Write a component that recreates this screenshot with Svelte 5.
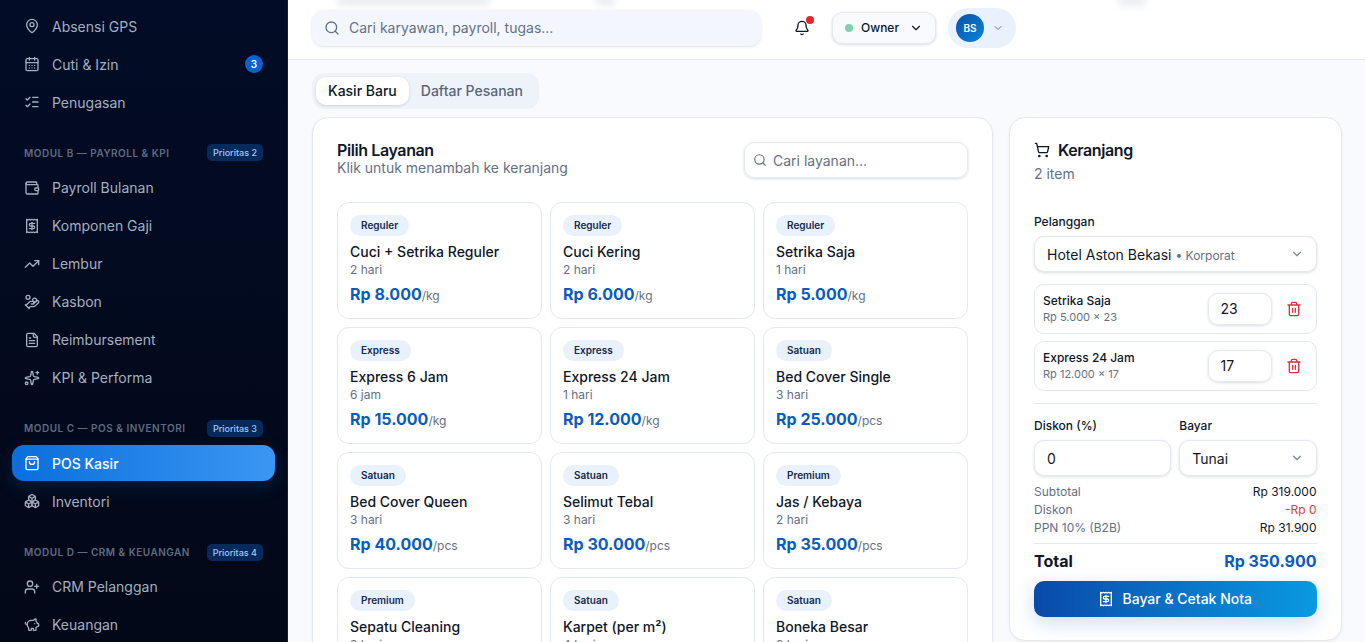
<script>
  const nav = [
    { label: 'Absensi GPS', icon: 'pin' },
    { label: 'Cuti & Izin', icon: 'calendar', count: 3 },
    { label: 'Penugasan', icon: 'tasks' },
    { section: 'MODUL B — PAYROLL & KPI', tag: 'Prioritas 2' },
    { label: 'Payroll Bulanan', icon: 'wallet' },
    { label: 'Komponen Gaji', icon: 'receipt' },
    { label: 'Lembur', icon: 'trend' },
    { label: 'Kasbon', icon: 'hand' },
    { label: 'Reimbursement', icon: 'file' },
    { label: 'KPI & Performa', icon: 'sparkles' },
    { section: 'MODUL C — POS & INVENTORI', tag: 'Prioritas 3' },
    { label: 'POS Kasir', icon: 'bag', active: true },
    { label: 'Inventori', icon: 'boxes' },
    { section: 'MODUL D — CRM & KEUANGAN', tag: 'Prioritas 4' },
    { label: 'CRM Pelanggan', icon: 'userplus' },
    { label: 'Keuangan', icon: 'piggy' }
  ];

  const icons = {
    pin: '<path d="M20 10c0 5-5.5 10.2-7.4 11.8a1 1 0 0 1-1.2 0C9.500 20.200 4 15 4 10a8 8 0 0 1 16 0"/><circle cx="12" cy="10" r="3"/>',
    calendar: '<path d="M8 2v4M16 2v4"/><rect x="3" y="4" width="18" height="18" rx="2"/><path d="M3 10h18M8 14h.01M12 14h.01M16 14h.01M8 18h.01M12 18h.01M16 18h.01"/>',
    tasks: '<path d="M13 5h8M13 12h8M13 19h8M3 17l2 2 4-4M3 7l2 2 4-4"/>',
    wallet: '<path d="M19 7V4a1 1 0 0 0-1-1H5a2 2 0 0 0 0 4h15a1 1 0 0 1 1 1v4h-3a2 2 0 0 0 0 4h3a1 1 0 0 0 1-1v-2a1 1 0 0 0-1-1"/><path d="M3 5v14a2 2 0 0 0 2 2h15a1 1 0 0 0 1-1v-4"/>',
    receipt: '<path d="M4 2v20l2-1 2 1 2-1 2 1 2-1 2 1 2-1 2 1V2l-2 1-2-1-2 1-2-1-2 1-2-1-2 1Z"/><path d="M16 8h-6a2 2 0 1 0 0 4h4a2 2 0 1 1 0 4H8M12 17.500v-11"/>',
    trend: '<path d="M16 7h6v6"/><path d="m22 7-8.500 8.500-5-5L2 17"/>',
    hand: '<path d="M11 15h2a2 2 0 1 0 0-4h-3c-.6 0-1.100.2-1.400.6L3 17"/><path d="m7 21 1.600-1.400c.3-.4.8-.6 1.400-.6h4c1.100 0 2.100-.4 2.800-1.200l4.600-4.400a2 2 0 0 0-2.750-2.910l-4.200 3.900M2 16l6 6"/><circle cx="16" cy="9" r="2.900"/><circle cx="6" cy="5" r="3"/>',
    file: '<path d="M15 2H6a2 2 0 0 0-2 2v16a2 2 0 0 0 2 2h12a2 2 0 0 0 2-2V7Z"/><path d="M14 2v4a2 2 0 0 0 2 2h4M10 9H8M16 13H8M16 17H8"/>',
    sparkles: '<path d="M11.017 2.814a1 1 0 0 1 1.966 0l1.051 5.558a2 2 0 0 0 1.594 1.594l5.558 1.051a1 1 0 0 1 0 1.966l-5.558 1.051a2 2 0 0 0-1.594 1.594l-1.051 5.558a1 1 0 0 1-1.966 0l-1.051-5.558a2 2 0 0 0-1.594-1.594l-5.558-1.051a1 1 0 0 1 0-1.966l5.558-1.051a2 2 0 0 0 1.594-1.594z"/><path d="M20 2v4M22 4h-4"/><circle cx="4" cy="20" r="2"/>',
    bag: '<path d="M16 10a4 4 0 0 1-8 0"/><path d="M3.100 6.200h17.800"/><path d="M3.400 5.500 5 3.300A2 2 0 0 1 6.600 2.500h10.800a2 2 0 0 1 1.600.8l1.600 2.200a2 2 0 0 1 .4 1.200V20a2 2 0 0 1-2 2H5a2 2 0 0 1-2-2V6.700a2 2 0 0 1 .4-1.200Z"/>',
    boxes: '<path d="M2.970 12.920A2 2 0 0 0 2 14.630v3.240a2 2 0 0 0 .97 1.710l3 1.800a2 2 0 0 0 2.060 0L12 19v-5.500l-5-3-4.030 2.420Z"/><path d="m7 16.500-4.740-2.850M7 16.500l5-3M7 16.500v5.170"/><path d="M12 13.500V19l3.970 2.380a2 2 0 0 0 2.060 0l3-1.800a2 2 0 0 0 .97-1.710v-3.240a2 2 0 0 0-.97-1.710L17 10.500l-5 3Z"/><path d="m17 16.500-5-3M17 16.500l4.740-2.850M17 16.500v5.170"/><path d="M7.970 4.420A2 2 0 0 0 7 6.130v4.370l5 3 5-3V6.130a2 2 0 0 0-.97-1.710l-3-1.800a2 2 0 0 0-2.060 0l-3 1.800Z"/><path d="M12 8 7.260 5.150M12 8l4.740-2.850M12 13.500V8"/>',
    userplus: '<path d="M16 21v-2a4 4 0 0 0-4-4H6a4 4 0 0 0-4 4v2"/><circle cx="9" cy="7" r="4"/><path d="M19 8v6M22 11h-6"/>',
    piggy: '<path d="M11 17h3v2a1 1 0 0 0 1 1h2a1 1 0 0 0 1-1v-3a3.200 3.200 0 0 0 2-2h1a1 1 0 0 0 1-1v-2a1 1 0 0 0-1-1h-1a5 5 0 0 0-2-4V3a4 4 0 0 0-3.200 1.600l-.3.400H11a6 6 0 0 0-6 6v1a5 5 0 0 0 2 4v3a1 1 0 0 0 1 1h2a1 1 0 0 0 1-1z"/><path d="M16 10h.01M2 8v1a2 2 0 0 0 2 2h1"/>'
  };

  const services = [
    { tag: 'Reguler', name: 'Cuci + Setrika Reguler', time: '2 hari', price: 'Rp 8.000', unit: '/kg' },
    { tag: 'Reguler', name: 'Cuci Kering', time: '2 hari', price: 'Rp 6.000', unit: '/kg' },
    { tag: 'Reguler', name: 'Setrika Saja', time: '1 hari', price: 'Rp 5.000', unit: '/kg' },
    { tag: 'Express', name: 'Express 6 Jam', time: '6 jam', price: 'Rp 15.000', unit: '/kg' },
    { tag: 'Express', name: 'Express 24 Jam', time: '1 hari', price: 'Rp 12.000', unit: '/kg' },
    { tag: 'Satuan', name: 'Bed Cover Single', time: '3 hari', price: 'Rp 25.000', unit: '/pcs' },
    { tag: 'Satuan', name: 'Bed Cover Queen', time: '3 hari', price: 'Rp 40.000', unit: '/pcs' },
    { tag: 'Satuan', name: 'Selimut Tebal', time: '3 hari', price: 'Rp 30.000', unit: '/pcs' },
    { tag: 'Premium', name: 'Jas / Kebaya', time: '2 hari', price: 'Rp 35.000', unit: '/pcs' },
    { tag: 'Premium', name: 'Sepatu Cleaning', time: '3 hari', price: 'Rp 50.000', unit: '/psg' },
    { tag: 'Satuan', name: 'Karpet (per m²)', time: '4 hari', price: 'Rp 20.000', unit: '/m²' },
    { tag: 'Satuan', name: 'Boneka Besar', time: '2 hari', price: 'Rp 30.000', unit: '/pcs' }
  ];

  const cart = [
    { name: 'Setrika Saja', detail: 'Rp 5.000 × 23', qty: 23 },
    { name: 'Express 24 Jam', detail: 'Rp 12.000 × 17', qty: 17 }
  ];
</script>

<div class="app">
  <aside class="sidebar">
    {#each nav as item}
      {#if item.section}
        <div class="section">
          <span>{item.section}</span>
          <em>{item.tag}</em>
        </div>
      {:else}
        <div class="nav-item" class:active={item.active}>
          <svg class="ico" viewBox="0 0 24 24">{@html icons[item.icon]}</svg>
          <span>{item.label}</span>
          {#if item.count}<b>{item.count}</b>{/if}
        </div>
      {/if}
    {/each}
  </aside>

  <div class="main">
    <header class="topbar">
      <!-- blurred page text showing through the top edge of the bar -->
      <i class="smear one"></i>
      <i class="smear two"></i>
      <i class="smear three"></i>
      <div class="global-search">
        <svg class="ico" viewBox="0 0 24 24"><circle cx="11" cy="11" r="8"/><path d="m21 21-4.300-4.300"/></svg>
        <span>Cari karyawan, payroll, tugas...</span>
      </div>
      <div class="bell">
        <svg class="ico" viewBox="0 0 24 24"><path d="M10.300 21a1.900 1.900 0 0 0 3.400 0"/><path d="M3.300 15.300A1 1 0 0 0 4 17h16a1 1 0 0 0 .7-1.700C19.400 14 18 12.500 18 8A6 6 0 0 0 6 8c0 4.500-1.400 6-2.700 7.300"/></svg>
        <i></i>
      </div>
      <div class="role">
        <i></i>
        <span>Owner</span>
        <svg class="ico" viewBox="0 0 24 24"><path d="m6 9 6 6 6-6"/></svg>
      </div>
      <div class="user">
        <div class="avatar">BS</div>
        <svg class="ico" viewBox="0 0 24 24"><path d="m6 9 6 6 6-6"/></svg>
      </div>
    </header>

    <main class="content">
      <div class="tabs">
        <div class="tab on">Kasir Baru</div>
        <div class="tab">Daftar Pesanan</div>
      </div>

      <div class="columns">
        <section class="card services">
          <div class="services-head">
            <div>
              <h2>Pilih Layanan</h2>
              <p>Klik untuk menambah ke keranjang</p>
            </div>
            <div class="service-search">
              <svg class="ico" viewBox="0 0 24 24"><circle cx="11" cy="11" r="8"/><path d="m21 21-4.300-4.300"/></svg>
              <span>Cari layanan...</span>
            </div>
          </div>
          <div class="service-grid">
            {#each services as s}
              <div class="service">
                <span class="tag">{s.tag}</span>
                <div class="name">{s.name}</div>
                <div class="time">{s.time}</div>
                <div class="price">{s.price}<small>{s.unit}</small></div>
              </div>
            {/each}
          </div>
        </section>

        <section class="card basket">
          <h2 class="basket-title">
            <svg class="ico" viewBox="0 0 24 24"><circle cx="8" cy="21" r="1"/><circle cx="19" cy="21" r="1"/><path d="M2.050 2.050h2l2.660 12.420a2 2 0 0 0 2 1.580h9.780a2 2 0 0 0 1.950-1.570l1.650-7.430H5.120"/></svg>
            Keranjang
          </h2>
          <p class="count">2 item</p>

          <div class="field-label first">Pelanggan</div>
          <div class="control">
            <span>Hotel Aston Bekasi <small>• Korporat</small></span>
            <svg class="ico" viewBox="0 0 24 24"><path d="m6 9 6 6 6-6"/></svg>
          </div>

          <div class="lines">
            {#each cart as line}
              <div class="line">
                <div class="line-text">
                  <div class="line-name">{line.name}</div>
                  <div class="line-detail">{line.detail}</div>
                </div>
                <div class="qty">{line.qty}</div>
                <svg class="ico trash" viewBox="0 0 24 24"><path d="M10 11v6M14 11v6M19 6v14a2 2 0 0 1-2 2H7a2 2 0 0 1-2-2V6M3 6h18M8 6V4a2 2 0 0 1 2-2h4a2 2 0 0 1 2 2v2"/></svg>
              </div>
            {/each}
          </div>

          <div class="pay-row">
            <div>
              <div class="field-label">Diskon (%)</div>
              <div class="control"><span>0</span></div>
            </div>
            <div>
              <div class="field-label">Bayar</div>
              <div class="control">
                <span>Tunai</span>
                <svg class="ico" viewBox="0 0 24 24"><path d="m6 9 6 6 6-6"/></svg>
              </div>
            </div>
          </div>

          <div class="sums">
            <div><span>Subtotal</span><b>Rp 319.000</b></div>
            <div><span>Diskon</span><b class="minus">-Rp 0</b></div>
            <div><span>PPN 10% (B2B)</span><b>Rp 31.900</b></div>
          </div>
          <div class="total"><span>Total</span><b>Rp 350.900</b></div>

          <button class="pay">
            <svg class="ico" viewBox="0 0 24 24">{@html icons.receipt}</svg>
            Bayar &amp; Cetak Nota
          </button>
        </section>
      </div>
    </main>
  </div>
</div>

<style>
  :global(body) {
    margin: 0;
    font-family: Inter, "Noto Sans", sans-serif;
    color: #0f172a;
    background: #f8fafd;
  }
  .app {
    display: flex;
    height: 642px;
    overflow: hidden;
  }
  .ico {
    width: 16px;
    height: 16px;
    flex: none;
    fill: none;
    stroke: currentColor;
    stroke-width: 2;
    stroke-linecap: round;
    stroke-linejoin: round;
  }

  .sidebar {
    width: 288px;
    flex: none;
    box-sizing: border-box;
    padding: 8px 12px 0;
    border-right: 1px solid #14203a;
    background: linear-gradient(180deg, #020c26, #020817);
    overflow: hidden;
    display: flex;
    flex-direction: column;
    gap: 2px;
  }
  .nav-item {
    display: flex;
    align-items: center;
    gap: 12px;
    height: 36px;
    flex: none;
    padding: 0 12px 0 12px;
    border-radius: 12px;
    color: #a3afc0;
    font-size: 14px;
  }
  .nav-item span { flex: 1; }
  .nav-item b {
    width: 18px;
    height: 18px;
    border-radius: 50%;
    background: #0a62d0;
    color: #fff;
    font-size: 10px;
    font-weight: 600;
    display: flex;
    align-items: center;
    justify-content: center;
  }
  .nav-item.active {
    background: linear-gradient(90deg, #0a6fdc, #3b96f3);
    color: #fff;
    font-weight: 500;
    box-shadow: 0 6px 18px rgba(10, 111, 220, 0.2);
  }
  .section {
    display: flex;
    align-items: center;
    justify-content: space-between;
    height: 17.67px;
    flex: none;
    margin: 22px 0 6px;
    padding: 0 12px;
  }
  .section span {
    font-size: 10px;
    font-weight: 600;
    letter-spacing: 0.5px;
    color: #5d6b80;
  }
  .section em {
    font-style: normal;
    font-size: 9px;
    font-weight: 500;
    color: #a8c8f0;
    background: #062a5c;
    padding: 3px 6px;
    border-radius: 5px;
  }

  .main {
    flex: 1;
    min-width: 0;
    display: flex;
    flex-direction: column;
  }
  .topbar {
    position: relative;
    height: 60px;
    flex: none;
    box-sizing: border-box;
    border-bottom: 1px solid #e4e9f1;
    background: #fff;
    display: flex;
    align-items: center;
    padding: 0 24px 4px;
    overflow: hidden;
  }
  .smear {
    position: absolute;
    top: -3px;
    height: 7px;
    background: #dfe2e7;
    filter: blur(4px);
  }
  .smear.one { left: 50px; width: 150px; }
  .smear.two { left: 308px; width: 18px; }
  .smear.three { left: 832px; width: 24px; }
  .global-search {
    width: 449px;
    height: 36px;
    display: flex;
    align-items: center;
    gap: 9px;
    padding: 0 12px;
    box-sizing: border-box;
    border-radius: 12px;
    background: #f3f7fd;
    box-shadow: 0 1px 3px rgba(15, 23, 42, 0.12);
    color: #667085;
    font-size: 14px;
  }
  .bell {
    position: relative;
    margin-left: 33px;
    width: 16px;
    height: 16px;
    color: #0f172a;
  }
  .bell i {
    position: absolute;
    top: -4px;
    right: -4px;
    width: 8px;
    height: 8px;
    border-radius: 50%;
    background: #e5262c;
  }
  .role {
    margin-left: 22px;
    height: 32px;
    width: 104px;
    box-sizing: border-box;
    display: flex;
    align-items: center;
    padding: 0 12px;
    gap: 8px;
    border: 1px solid #e4e9f1;
    border-radius: 10px;
    background: #f8fafd;
    box-shadow: 0 1px 3px rgba(15, 23, 42, 0.15);
    font-size: 12px;
    font-weight: 500;
  }
  .role i {
    width: 8px;
    height: 8px;
    border-radius: 50%;
    background: #7fd1ae;
  }
  .role span { flex: 1; }
  .role .ico { width: 14px; height: 14px; }
  .user {
    margin-left: 12px;
    width: 68px;
    height: 40px;
    box-sizing: border-box;
    padding: 0 8px;
    display: flex;
    align-items: center;
    gap: 8px;
    border-radius: 20px;
    background: #e8f1fc;
    color: #64748b;
  }
  .user .ico { width: 12px; height: 12px; }
  .avatar {
    width: 28px;
    height: 28px;
    border-radius: 50%;
    background: linear-gradient(135deg, #0a4fa8, #0a86d8);
    color: #fff;
    font-size: 10px;
    font-weight: 600;
    display: flex;
    align-items: center;
    justify-content: center;
  }

  .content {
    flex: 1;
    min-height: 0;
    padding: 13px 24px 0;
  }
  .tabs {
    display: inline-flex;
    gap: 0;
    padding: 4px;
    border-radius: 12px;
    background: #eef3f9;
    vertical-align: top;
  }
  .tab {
    height: 28px;
    line-height: 28px;
    padding: 0 12px;
    border-radius: 10px;
    font-size: 14px;
    font-weight: 500;
    color: #5a6578;
  }
  .tab.on {
    background: #fff;
    color: #0f172a;
    box-shadow: 0 1px 3px rgba(15, 23, 42, 0.15);
  }
  .columns {
    margin-top: 8px;
    margin-right: -0.5px;
    display: grid;
    grid-template-columns: minmax(0, 1fr) 332.5px;
    gap: 16px;
    align-items: start;
  }
  .card {
    box-sizing: border-box;
    background: #fff;
    border: 1px solid #e4e9f1;
    border-radius: 16px;
    box-shadow: 0 1px 3px rgba(15, 23, 42, 0.06);
  }
  .services {
    padding: 24px;
  }
  .services-head {
    display: flex;
    align-items: flex-start;
    justify-content: space-between;
    margin-bottom: 24px;
  }
  h2 {
    margin: 0;
    font-size: 16px;
    line-height: 16px;
    font-weight: 600;
    letter-spacing: -0.4px;
  }
  .services-head p {
    margin: 1px 0 0;
    font-size: 14px;
    line-height: 18px;
    color: #667085;
  }
  .service-search {
    width: 224px;
    height: 36px;
    box-sizing: border-box;
    display: flex;
    align-items: center;
    gap: 6px;
    padding: 0 8px 0 8px;
    margin-right: 0;
    border: 1px solid #e4e9f1;
    border-radius: 10px;
    box-shadow: 0 1px 3px rgba(15, 23, 42, 0.15);
    font-size: 14px;
    color: #667085;
  }
  .service-search .ico { width: 14px; height: 14px; }
  .service-grid {
    display: grid;
    grid-template-columns: repeat(3, 205px);
    gap: 8px;
  }
  .service {
    box-sizing: border-box;
    height: 117px;
    padding: 12px;
    border: 1px solid #e4e9f1;
    border-radius: 12px;
    background: #fff;
  }
  .tag {
    display: inline-block;
    height: 21px;
    line-height: 21px;
    padding: 0 11px;
    border-radius: 11px;
    background: #e9f1fc;
    color: #14294d;
    font-size: 10px;
    font-weight: 600;
    vertical-align: top;
  }
  .name {
    margin-top: 6px;
    font-size: 14px;
    line-height: 20px;
    font-weight: 500;
  }
  .time {
    font-size: 12px;
    line-height: 16px;
    color: #667085;
  }
  .price {
    margin-top: 4px;
    font-size: 16px;
    line-height: 24px;
    font-weight: 700;
    color: #0a5cc0;
  }
  .price small {
    font-size: 12px;
    font-weight: 400;
    color: #667085;
  }

  .basket {
    height: 524px;
    padding: 24px;
  }
  .basket-title {
    display: flex;
    align-items: center;
    gap: 8px;
    line-height: 16px;
  }
  .count {
    margin: 7px 0 0;
    font-size: 14px;
    line-height: 18px;
    color: #667085;
  }
  .field-label {
    font-size: 12px;
    line-height: 16px;
    font-weight: 500;
    margin-bottom: 6px;
  }
  .field-label.first { margin-top: 31px; }
  .control {
    height: 36px;
    box-sizing: border-box;
    display: flex;
    align-items: center;
    justify-content: space-between;
    padding: 0 12px;
    border: 1px solid #e4e9f1;
    border-radius: 10px;
    box-shadow: 0 1px 3px rgba(15, 23, 42, 0.14);
    font-size: 14px;
    background: #fff;
  }
  .control small {
    font-size: 12px;
    color: #667085;
  }
  .control .ico {
    width: 14px;
    height: 14px;
    color: #7b8698;
  }
  .lines {
    margin-top: 12px;
    display: flex;
    flex-direction: column;
    gap: 7px;
    padding-bottom: 12px;
    border-bottom: 1px solid #e4e9f1;
  }
  .line {
    height: 50px;
    box-sizing: border-box;
    display: flex;
    align-items: center;
    padding: 0 14px 0 8px;
    border: 1px solid #e4e9f1;
    border-radius: 10px;
  }
  .line-text { flex: 1; }
  .line-name {
    font-size: 12px;
    line-height: 16px;
    font-weight: 500;
  }
  .line-detail {
    font-size: 11px;
    line-height: 16px;
    color: #667085;
  }
  .qty {
    width: 64px;
    height: 32px;
    box-sizing: border-box;
    line-height: 30px;
    padding-left: 12px;
    border: 1px solid #e4e9f1;
    border-radius: 10px;
    box-shadow: 0 1px 3px rgba(15, 23, 42, 0.14);
    font-size: 14px;
  }
  .trash {
    margin-left: 14px;
    color: #dc2f3a;
  }
  .pay-row {
    margin-top: 14px;
    display: grid;
    grid-template-columns: 1fr 1fr;
    gap: 8px;
  }
  .sums {
    margin-top: 7px;
    padding-bottom: 6px;
    border-bottom: 1px solid #e4e9f1;
  }
  .sums div {
    display: flex;
    justify-content: space-between;
    font-size: 12px;
    line-height: 18px;
    color: #667085;
  }
  .sums b {
    font-weight: 400;
    color: #0f172a;
  }
  .sums b.minus { color: #e23b44; }
  .total {
    display: flex;
    justify-content: space-between;
    align-items: center;
    height: 37px;
    box-sizing: border-box;
    padding-bottom: 4px;
    font-size: 16px;
    font-weight: 700;
  }
  .total b {
    font-weight: 700;
    color: #0a5cc0;
  }
  .pay {
    width: 100%;
    height: 36px;
    padding: 0 0 1px;
    border: 0;
    border-radius: 10px;
    display: flex;
    align-items: center;
    justify-content: center;
    gap: 8px;
    color: #fff;
    font: 500 14px Inter, sans-serif;
    background: linear-gradient(90deg, #0a4aa8, #0a9ae2);
    box-shadow: 0 6px 20px rgba(10, 90, 190, 0.2);
  }
</style>
